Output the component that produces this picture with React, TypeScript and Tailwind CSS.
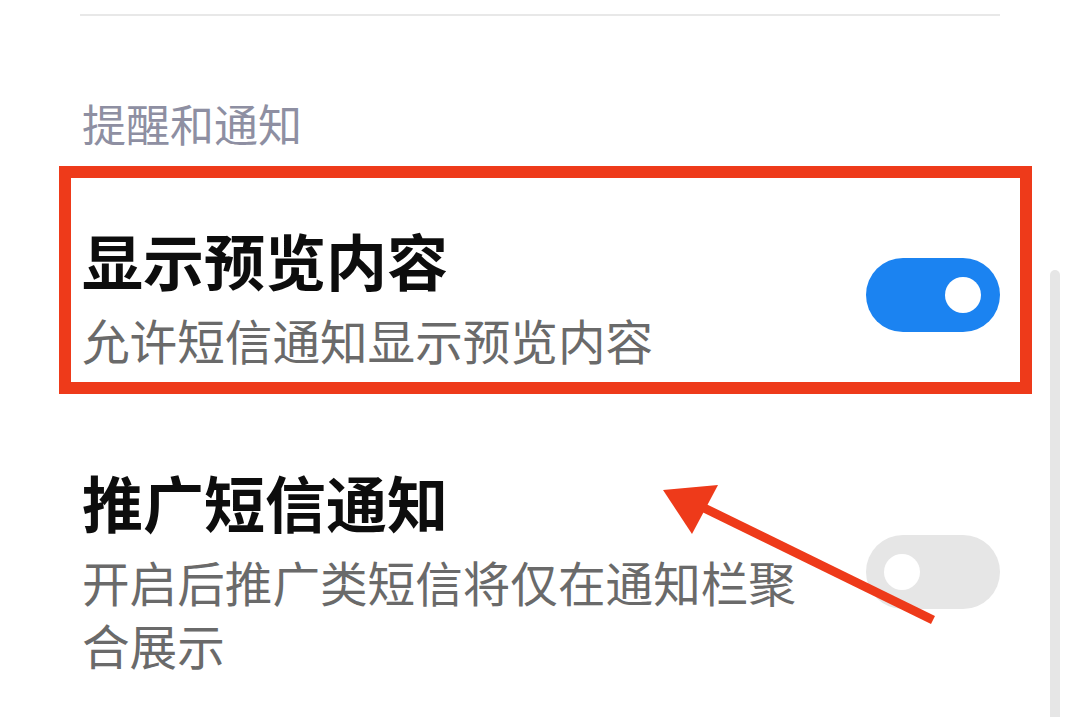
import React from 'react';

const font = { fontFamily: '"Noto Sans CJK SC", "Noto Sans", sans-serif' };

function Toggle({ on }: { on: boolean }) {
  return (
    <div
      className={
        on
          ? 'mb-[10px] flex h-[74px] w-[134px] shrink-0 items-center justify-end rounded-full bg-[#1b83f1] pr-[19px]'
          : 'mb-[4px] flex h-[74px] w-[134px] shrink-0 items-center justify-start rounded-full bg-[#e6e6e6] pl-[18px]'
      }
    >
      <div className="h-[36px] w-[36px] rounded-full bg-white" />
    </div>
  );
}

function SettingRow({ title, desc, on }: { title: string; desc: string; on: boolean }) {
  return (
    <div className="flex items-center justify-between pl-[82px] pr-[80px]">
      <div className="w-[740px]">
        <div className="text-[61px] font-bold leading-[61px] text-[#0d0d0d]">{title}</div>
        <div className="mt-[18px] text-[47.6px] leading-[63px] text-[#6a6a6a]">{desc}</div>
      </div>
      <Toggle on={on} />
    </div>
  );
}

export default function App() {
  return (
    <div className="relative h-[717px] w-[1080px] overflow-hidden bg-white" style={font}>
      <div className="mx-[80px] mt-[14px] h-[2px] bg-[#e8e8e8]" />

      <div className="ml-[82px] mt-[85px] text-[44px] leading-[44px] text-[#8e8fa2]">提醒和通知</div>

      <div className="mt-[84px]">
        <SettingRow title="显示预览内容" desc="允许短信通知显示预览内容" on />
      </div>
      <div className="mt-[100px]">
        <SettingRow title="推广短信通知" desc="开启后推广类短信将仅在通知栏聚合展示" on={false} />
      </div>

      {/* scrollbar */}
      <div className="absolute right-[20px] top-[270px] h-[460px] w-[10px] rounded-t-full bg-[#e6e6e6]" />

      {/* annotation box */}
      <div className="pointer-events-none absolute left-[59px] top-[166px] h-[228px] w-[973px] border-[12px] border-[#ee3a1a]" />

      {/* annotation arrow */}
      <svg className="pointer-events-none absolute left-0 top-0" width="1080" height="717" viewBox="0 0 1080 717">
        <line x1="933" y1="620" x2="700" y2="506" stroke="#ee3a1a" strokeWidth="9" />
        <polygon points="663,490 718,485 692,534" fill="#ee3a1a" />
      </svg>
    </div>
  );
}
